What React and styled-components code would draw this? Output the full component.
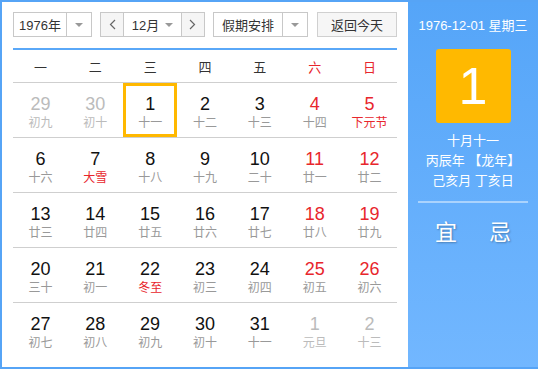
import React from "react";
import styled, { createGlobalStyle } from "styled-components";

const Global = createGlobalStyle`
  html, body { margin: 0; padding: 0; background: #fff; }
  body { font-family: "Liberation Sans", Arial, "Noto Sans CJK SC", sans-serif; }
`;

const CJK = `"Liberation Sans", Arial, "Noto Sans CJK SC", sans-serif`;

const Frame = styled.div`
  width: 538px;
  height: 369px;
  box-sizing: border-box;
  display: flex;
  border: 2px solid #56a4f6;
  border-right: none;
`;

const Main = styled.div`
  width: 406px;
  box-sizing: border-box;
  padding: 10px 11px 0 11px;
  background: #fff;
`;

const Toolbar = styled.div`
  display: flex;
  align-items: center;
  height: 25px;
  gap: 8px;
`;

const Select = styled.div`
  display: flex;
  height: 25px;
  box-sizing: border-box;
  border: 1px solid #c8c8c8;
  background: #fff;
  width: ${(p) => p.w}px;
  font-family: ${CJK};
  font-size: 13px;
  color: #333;
`;

const SelectLabel = styled.div`
  flex: 1;
  display: flex;
  align-items: center;
  justify-content: center;
  border-right: 1px solid #c8c8c8;
`;

const ArrowBox = styled.div`
  width: 24px;
  display: flex;
  align-items: center;
  justify-content: center;
`;

const Caret = styled.span`
  width: 0;
  height: 0;
  border-left: 4px solid transparent;
  border-right: 4px solid transparent;
  border-top: 4px solid #999;
`;

const MonthGroup = styled.div`
  display: flex;
  height: 25px;
  box-sizing: border-box;
  border: 1px solid #c8c8c8;
  width: 106px;
  font-family: ${CJK};
  font-size: 13px;
  color: #333;
`;

const NavBtn = styled.div`
  width: 22px;
  display: flex;
  align-items: center;
  justify-content: center;
  background: #f5f5f5;
  color: #666;
  ${(p) => (p.left ? "border-right: 1px solid #c8c8c8;" : "border-left: 1px solid #c8c8c8;")}
`;

const MonthLabel = styled.div`
  flex: 1;
  display: flex;
  align-items: center;
  justify-content: center;
  gap: 6px;
`;

const TodayBtn = styled.div`
  margin-left: 1px;
  width: 81px;
  height: 25px;
  box-sizing: border-box;
  border: 1px solid #d0d0d0;
  background: #f6f6f6;
  display: flex;
  align-items: center;
  justify-content: center;
  font-family: ${CJK};
  font-size: 13px;
  color: #333;
`;

const BlueLine = styled.div`
  margin-top: 11px;
  height: 2px;
  background: #5aa8f8;
  width: 384px;
`;

const Grid = styled.div`
  width: 384px;
  display: grid;
  grid-template-columns: repeat(7, 1fr);
`;

const Week = styled.div`
  height: 32px;
  display: flex;
  align-items: center;
  justify-content: center;
  font-family: ${CJK};
  font-size: 13px;
  color: ${(p) => (p.red ? "#e8262c" : "#333")};
  border-bottom: 1px solid #cfcfcf;
`;

const Cell = styled.div`
  height: 55px;
  box-sizing: border-box;
  display: flex;
  flex-direction: column;
  align-items: center;
  border-bottom: ${(p) => (p.last ? "none" : "1px solid #cfcfcf")};
  position: relative;
`;

const Sel = styled.div`
  position: absolute;
  left: 0;
  right: 1px;
  top: 0;
  bottom: 0;
  border: 3px solid #ffb800;
`;

const Num = styled.div`
  margin-top: 11px;
  font-family: "Liberation Sans", Arial, sans-serif;
  font-size: 18px;
  line-height: 20px;
  color: ${(p) => p.c};
`;

const Lunar = styled.div`
  margin-top: 1px;
  font-family: ${CJK};
  font-size: 12px;
  line-height: 16px;
  color: ${(p) => p.c};
`;

const Side = styled.div`
  flex: 1;
  background: linear-gradient(to bottom, #55a5f8, #72b7ff);
  display: flex;
  flex-direction: column;
  align-items: center;
  color: #fff;
  font-family: ${CJK};
`;

const DateText = styled.div`
  margin-top: 15px;
  font-size: 13px;
  line-height: 18px;
`;

const BigBox = styled.div`
  margin-top: 14px;
  width: 75px;
  height: 74px;
  border-radius: 3px;
  background: #ffb900;
  display: flex;
  align-items: center;
  justify-content: center;
  font-family: "Liberation Sans", Arial, sans-serif;
  font-size: 52px;
  color: #fff;
`;

const InfoLine = styled.div`
  font-size: 13px;
  line-height: 20px;
  margin-top: ${(p) => p.mt || 0}px;
`;

const Divider = styled.div`
  margin-top: 10px;
  width: 110px;
  height: 2px;
  background: rgba(255, 255, 255, 0.45);
`;

const YiJi = styled.div`
  margin-top: 15px;
  display: flex;
  gap: 32px;
  font-size: 22px;
  line-height: 30px;
  text-shadow: 1px 1px 2px rgba(0, 0, 0, 0.3);
`;

const RED = "#e8262c";
const BLACK = "#111";
const GRAY = "#999";
const FADE = "#bbb";

const days = [
  [29, "初九", "o"], [30, "初十", "o"], [1, "十一", "n", "sel"], [2, "十二", "n"], [3, "十三", "n"], [4, "十四", "w"], [5, "下元节", "w", "fest"],
  [6, "十六", "n"], [7, "大雪", "n", "fest"], [8, "十八", "n"], [9, "十九", "n"], [10, "二十", "n"], [11, "廿一", "w"], [12, "廿二", "w"],
  [13, "廿三", "n"], [14, "廿四", "n"], [15, "廿五", "n"], [16, "廿六", "n"], [17, "廿七", "n"], [18, "廿八", "w"], [19, "廿九", "w"],
  [20, "三十", "n"], [21, "初一", "n"], [22, "冬至", "n", "fest"], [23, "初三", "n"], [24, "初四", "n"], [25, "初五", "w"], [26, "初六", "w"],
  [27, "初七", "n"], [28, "初八", "n"], [29, "初九", "n"], [30, "初十", "n"], [31, "十一", "n"], [1, "元旦", "o"], [2, "十三", "o"],
];

const weeks = ["一", "二", "三", "四", "五", "六", "日"];

export default function App() {
  return (
    <>
      <Global />
      <Frame>
        <Main>
          <Toolbar>
            <Select w={80}>
              <SelectLabel>1976年</SelectLabel>
              <ArrowBox><Caret /></ArrowBox>
            </Select>
            <MonthGroup>
              <NavBtn left>
                <svg width="7" height="11" viewBox="0 0 7 11"><path d="M6 1 L1.5 5.5 L6 10" fill="none" stroke="#666" strokeWidth="1.2" /></svg>
              </NavBtn>
              <MonthLabel>12月<Caret /></MonthLabel>
              <NavBtn>
                <svg width="7" height="11" viewBox="0 0 7 11"><path d="M1 1 L5.5 5.5 L1 10" fill="none" stroke="#666" strokeWidth="1.2" /></svg>
              </NavBtn>
            </MonthGroup>
            <Select w={96}>
              <SelectLabel>假期安排</SelectLabel>
              <ArrowBox><Caret /></ArrowBox>
            </Select>
            <TodayBtn>返回今天</TodayBtn>
          </Toolbar>
          <BlueLine />
          <Grid>
            {weeks.map((w, i) => (
              <Week key={w} red={i >= 5}>{w}</Week>
            ))}
            {days.map(([d, l, t, f], i) => {
              const last = i >= 28;
              const numC = t === "o" ? FADE : t === "w" ? RED : BLACK;
              const lunC = t === "o" ? FADE : f === "fest" ? RED : GRAY;
              return (
                <Cell key={i} last={last}>
                  {f === "sel" && <Sel />}
                  <Num c={numC}>{d}</Num>
                  <Lunar c={lunC}>{l}</Lunar>
                </Cell>
              );
            })}
          </Grid>
        </Main>
        <Side>
          <DateText>1976-12-01 星期三</DateText>
          <BigBox>1</BigBox>
          <InfoLine mt={8}>十月十一</InfoLine>
          <InfoLine>丙辰年 【龙年】</InfoLine>
          <InfoLine>己亥月 丁亥日</InfoLine>
          <Divider />
          <YiJi><span>宜</span><span>忌</span></YiJi>
        </Side>
      </Frame>
    </>
  );
}
